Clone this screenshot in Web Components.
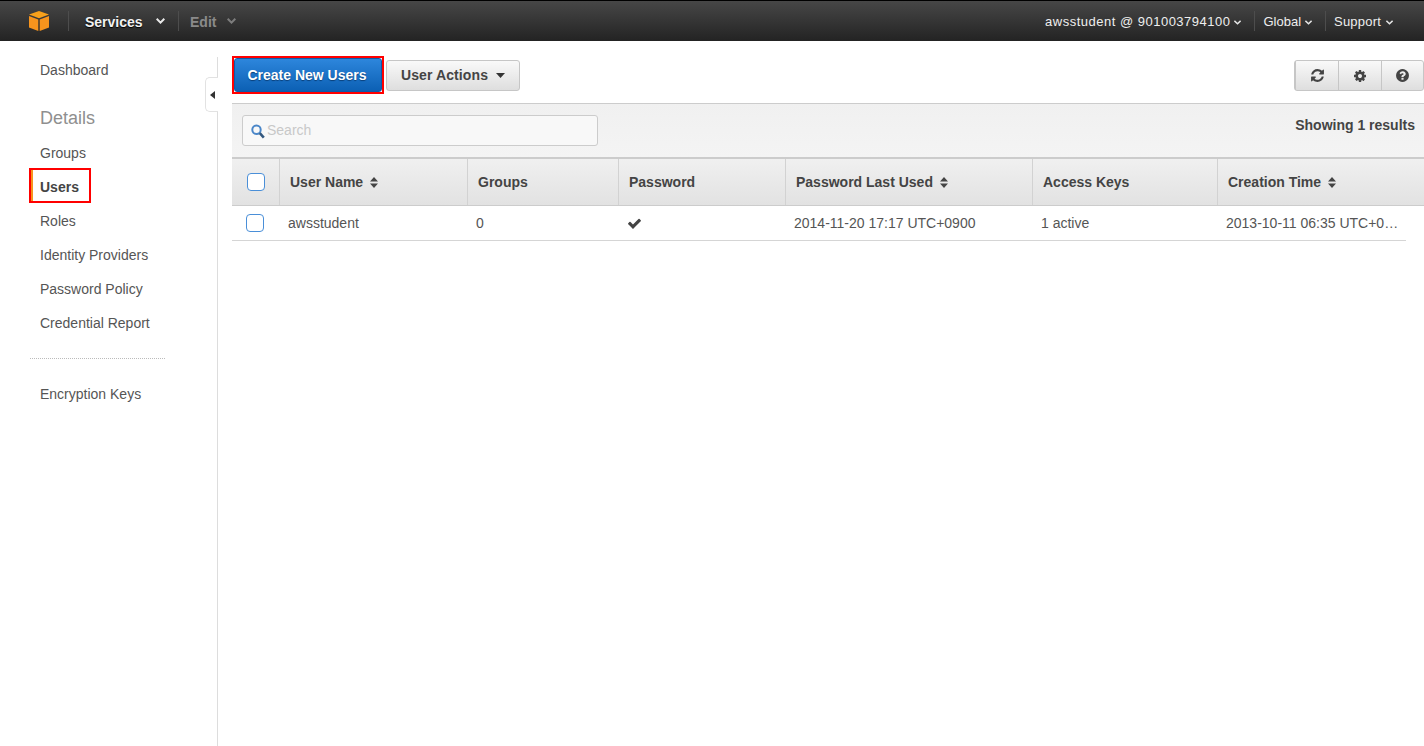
<!DOCTYPE html>
<html lang="en">
<head>
<meta charset="utf-8">
<title>IAM Users</title>
<style>
  html, body { margin: 0; height: 100%; overflow: hidden; background: #fff; }
  body { font: 14px "Liberation Sans", Arial, sans-serif; color: #444; }
</style>
</head>
<body>
<iam-app></iam-app>
<script>
const ICONS = {
  check: "M1671 566q0 40-28 68l-724 724-136 136q-28 28-68 28t-68-28l-136-136-362-362q-28-28-28-68t28-68l136-136q28-28 68-28t68 28l294 295 656-657q28-28 68-28t68 28l136 136q28 28 28 68z",
  refresh: "M1639 1056q0 5-1 7-64 268-268 434.5t-478 166.5q-146 0-282.5-55t-243.5-157l-129 129q-19 19-45 19t-45-19-19-45v-448q0-26 19-45t45-19h448q26 0 45 19t19 45-19 45l-137 137q71 66 161 102t187 36q134 0 250-65t186-179q11-17 53-117 8-23 30-23h192q13 0 22.5 9.5t9.5 22.5zm25-800v448q0 26-19 45t-45 19h-448q-26 0-45-19t-19-45 19-45l138-138q-148-137-349-137-134 0-250 65t-186 179q-11 17-53 117-8 23-30 23h-199q-13 0-22.5-9.5t-9.5-22.5v-7q65-268 270-434.5t480-166.5q146 0 284 55.5t245 156.5l130-129q19-19 45-19t45 19 19 45z",
  cog: "M1152 896q0-106-75-181t-181-75-181 75-75 181 75 181 181 75 181-75 75-181zm512-109v222q0 12-8 23t-20 13l-185 28q-19 54-39 91 35 50 107 138 10 12 10 25t-9 23q-27 37-99 108t-94 71q-12 0-26-9l-138-108q-44 23-91 38-16 136-29 186-7 28-36 28h-222q-14 0-24.5-8.5t-11.5-21.5l-28-184q-49-16-90-37l-141 107q-10 9-25 9-14 0-25-11-126-114-165-168-7-10-7-23 0-12 8-23 15-21 51-66.5t54-70.5q-27-50-41-99l-183-27q-13-2-21-12.5t-8-23.5v-222q0-12 8-23t19-13l186-28q14-46 39-92-40-57-107-138-10-12-10-24 0-10 9-23 26-36 98.5-107.5t94.5-71.5q13 0 26 10l138 107q44-23 91-38 16-136 29-186 7-28 36-28h222q14 0 24.5 8.5t11.5 21.5l28 184q49 16 90 37l142-107q9-9 24-9 13 0 25 10 129 119 165 170 7 8 7 22 0 12-8 23-15 21-51 66.5t-54 70.5q26 50 41 98l183 28q13 2 21 12.5t8 23.5z",
  help: "M1024 1376v-192q0-14-9-23t-23-9h-192q-14 0-23 9t-9 23v192q0 14 9 23t23 9h192q14 0 23-9t9-23zm256-672q0-88-55.5-163t-138.5-116-170-41q-243 0-371 213-15 24 8 42l132 100q7 6 19 6 16 0 25-12 53-68 86-92 34-24 86-24 48 0 85.5 26t37.5 59q0 38-20 61t-68 45q-63 28-115.5 86.5t-52.5 125.5v36q0 14 9 23t23 9h192q14 0 23-9t9-23q0-19 21.5-49.5t54.5-49.5q32-18 49-28.5t46-35 44.5-48 28-60.5 12.5-81zm384 192q0 209-103 385.5t-279.5 279.5-385.5 103-385.5-103-279.5-279.5-103-385.5 103-385.5 279.5-279.5 385.5-103 385.5 103 279.5 279.5 103 385.5z"
};

function icon(name, size, color) {
  return `<svg width="${size}" height="${size}" viewBox="0 0 1792 1792" fill="${color}" style="display:block"><path d="${ICONS[name]}"/></svg>`;
}

class IamTopbar extends HTMLElement {
  constructor() {
    super();
    const chevron = (c) => `<svg width="9" height="6" viewBox="0 0 9 6" fill="none" stroke="${c}" stroke-width="2"><path d="M.7 .8 4.5 4.6 8.3 .8"/></svg>`;
    const caret = `<svg class="caret" width="7" height="5" viewBox="0 0 7 5" fill="none" stroke="#e6e6e6" stroke-width="1.5"><path d="M.4 .8 3.5 3.8 6.6 .8"/></svg>`;
    this.attachShadow({ mode: "open" }).innerHTML = `
      <style>
        :host {
          display: flex; align-items: center; height: 40px; flex: none;
          border-top: 1px solid #000;
          background: linear-gradient(#474747, #232323);
          color: #eee; font-size: 13px;
        }
        .logo { width: 39px; padding-left: 29px; height: 20px; }
        .menu { display: flex; align-items: center; height: 20px; border-left: 1px solid #4d4d4d; font-size: 14px; font-weight: bold; }
        .menu span { position: relative; top: 1px; }
        .services { width: 93px; padding-left: 16px; color: #f2f2f2; text-shadow: 0 1px 1px #000; }
        .services svg { margin-left: 13px; }
        .edit { padding-left: 11px; color: #8a8a8a; }
        .edit svg { margin-left: 11px; }
        .right { margin-left: auto; display: flex; align-items: center; }
        .right div { display: flex; align-items: center; height: 20px; }
        .caret { position: relative; top: 1px; }
        .account { letter-spacing: .5px; padding-right: 13px; }
        .account svg { margin-left: 4px; }
        .region { border-left: 1px solid #4d4d4d; padding: 0 13px 0 8px; }
        .region svg { margin-left: 4px; }
        .support { border-left: 1px solid #4d4d4d; padding: 0 31px 0 8px; letter-spacing: .2px; }
        .support svg { margin-left: 5px; }
      </style>
      <div class="logo">
        <svg width="20" height="20" viewBox="0 0 20 20" style="display:block">
          <path d="M10 0 20 3.6 10 7.2 0 3.6z" fill="#f7a01b"/>
          <path d="M0 5 9.3 8.4V20L0 16.6z" fill="#f7941d"/>
          <path d="M20 5 10.7 8.4V20L20 16.6z" fill="#f7941d"/>
        </svg>
      </div>
      <div class="menu services"><span>Services</span>${chevron("#e8e8e8")}</div>
      <div class="menu edit"><span>Edit</span>${chevron("#7d7d7d")}</div>
      <div class="right">
        <div class="account"><span>awsstudent @ 901003794100</span>${caret}</div>
        <div class="region"><span>Global</span>${caret}</div>
        <div class="support"><span>Support</span>${caret}</div>
      </div>`;
  }
}

class IamNavItem extends HTMLElement {
  constructor() {
    super();
    this.attachShadow({ mode: "open" }).innerHTML = `
      <style>
        :host { display: block; height: 34px; line-height: 34px; padding-left: 40px; color: #555; }
        :host([active]) { padding-left: 31px; font-weight: bold; color: #444; }
        :host([active]) div {
          width: 49px; height: 31px; padding-left: 7px; line-height: 34px;
          border-left: 2px solid #f7941d; outline: 2px solid #f00;
        }
      </style>
      <div><slot></slot></div>`;
  }
}

class IamSidebar extends HTMLElement {
  constructor() {
    super();
    this.attachShadow({ mode: "open" }).innerHTML = `
      <style>
        :host {
          display: block; position: relative; flex: none; width: 218px; padding-top: 12px; box-sizing: border-box;
          background: linear-gradient(#ddd, #ddd) right 0 top 16px / 1px 100% no-repeat;
        }
        h2 { margin: 10px 0 0; padding-left: 40px; height: 39px; line-height: 43px; font-size: 18px; font-weight: normal; color: #8f8f8f; }
        hr { width: 135px; margin: 18px 0 18px 30px; border: 0; border-top: 1px dotted #bbb; }
        .collapse {
          position: absolute; left: 205px; top: 36px; width: 12px; height: 33px;
          display: flex; align-items: center; justify-content: center;
          background: #fff; border: 1px solid #e2e2e2; border-right: 0; border-radius: 5px 0 0 5px;
        }
      </style>
      <slot name="top"></slot>
      <h2>Details</h2>
      <slot></slot>
      <hr>
      <slot name="bottom"></slot>
      <div class="collapse"><svg width="5" height="8" viewBox="0 0 5 8" fill="#333"><path d="M5 0V8L0 4z"/></svg></div>`;
  }
}

class IamButton extends HTMLElement {
  constructor() {
    super();
    const caret = this.hasAttribute("caret") ? `<svg width="9" height="5" viewBox="0 0 9 5" fill="#333"><path d="M0 0H9L4.5 5z"/></svg>` : "";
    this.attachShadow({ mode: "open" }).innerHTML = `
      <style>
        :host { display: block; margin-top: 1px; }
        :host([primary]) { margin-top: 0; border: 2px solid #f00; }
        .face {
          display: flex; align-items: center; box-sizing: border-box; height: 31px;
          padding: 0 14px 2px 14px; border: 1px solid #c6c6c6; border-radius: 3px;
          background: linear-gradient(#f9f9f9, #dedede);
          font-weight: bold; color: #444; letter-spacing: .1px;
        }
        :host([primary]) .face {
          height: 34px; width: 148px; justify-content: center; padding: 0 2px 0 0;
          border: 1px solid #0f5aa8; background: linear-gradient(#2d86dc, #0c60b4);
          color: #fff; text-shadow: 0 1px 1px #0a3f78; letter-spacing: 0;
        }
        svg { margin-left: 8px; position: relative; top: 1px; }
      </style>
      <div class="face"><slot></slot>${caret}</div>`;
  }
}

class IamIconGroup extends HTMLElement {
  constructor() {
    super();
    this.attachShadow({ mode: "open" }).innerHTML = `
      <style>
        :host {
          display: flex; height: 31px; box-sizing: border-box; margin: 1px 0 0 auto;
          border: 1px solid #c6c6c6; border-radius: 3px;
          background: linear-gradient(#f9f9f9, #dedede);
        }
        div { width: 42px; display: flex; align-items: center; justify-content: center; border-left: 1px solid #c6c6c6; }
        div:first-child { border-left: 0; }
        div:last-child { width: 41px; }
      </style>
      <div>${icon("refresh", 15, "#444")}</div>
      <div>${icon("cog", 14, "#444")}</div>
      <div>${icon("help", 15, "#444")}</div>`;
  }
}

class IamFilterBar extends HTMLElement {
  constructor() {
    super();
    this.attachShadow({ mode: "open" }).innerHTML = `
      <style>
        :host {
          display: flex; justify-content: space-between; align-items: flex-start;
          height: 54px; box-sizing: border-box; border-top: 1px solid #ccc;
          background: linear-gradient(#f0f0f0, #f4f4f4); padding: 11px 9px 0 10px;
        }
        .search {
          display: flex; align-items: center; box-sizing: border-box; width: 356px; height: 31px;
          padding: 0 0 2px 8px; border: 1px solid #ccc; border-radius: 3px; background: #f8f8f8; color: #c8c8c8;
        }
        .search svg { margin-right: 2px; margin-top: 4px; }
        .count { font-weight: bold; color: #444; line-height: 20px; }
      </style>
      <div class="search">
        <svg width="14" height="15" viewBox="0 0 14 15" fill="none">
          <circle cx="5.5" cy="5.7" r="4.2" stroke="#4a86c8" stroke-width="2"/>
          <path d="M8.8 9.2 12.8 13.6" stroke="#33587f" stroke-width="2.6"/>
        </svg>
        Search
      </div>
      <div class="count"><slot></slot></div>`;
  }
}

class IamCheckbox extends HTMLElement {
  constructor() {
    super();
    this.attachShadow({ mode: "open" }).innerHTML = `
      <style>
        :host {
          display: block; width: 18px; height: 18px; box-sizing: border-box;
          border: 1px solid #4a8fd8; border-radius: 4px; background: #fff;
        }
      </style>`;
  }
}

const COLUMNS = "47px 188px 151px 167px 247px 185px 1fr";

class IamUserTable extends HTMLElement {
  constructor() {
    super();
    const sort = `<svg width="8" height="11" viewBox="0 0 8 11" fill="#444"><path d="M4 0 8 4.5H0zM4 11 0 6.5H8z"/></svg>`;
    const head = [["User Name", 1], ["Groups"], ["Password"], ["Password Last Used", 1], ["Access Keys"], ["Creation Time", 1]];
    this.attachShadow({ mode: "open" }).innerHTML = `
      <style>
        :host { display: block; }
        .head {
          display: grid; grid-template-columns: ${COLUMNS}; height: 49px; box-sizing: border-box;
          border-top: 2px solid #ccc; border-bottom: 1px solid #ccc;
          background: linear-gradient(#f0f0f0, #e2e2e2); font-weight: bold; color: #444;
        }
        .head > div { display: flex; align-items: center; gap: 7px; padding-left: 10px; border-left: 1px solid #d2d2d2; }
        .head > div:first-child { border-left: 0; padding-left: 15px; }
        .row {
          display: grid; grid-template-columns: ${COLUMNS}; height: 35px; box-sizing: border-box;
          margin-right: 18px; border-bottom: 1px solid #d5d5d5; color: #555;
        }
        .row > div { display: flex; align-items: center; padding-left: 9px; white-space: nowrap; overflow: hidden; }
        .row > div:first-child { padding-left: 14px; }
        .ellipsis { display: block !important; line-height: 34px; text-overflow: ellipsis; padding-right: 4px; }
      </style>
      <div class="head">
        <div><iam-checkbox></iam-checkbox></div>
        ${head.map(([t, s]) => `<div>${t}${s ? sort : ""}</div>`).join("")}
      </div>
      <div class="row">
        <div><iam-checkbox></iam-checkbox></div>
        <div>awsstudent</div>
        <div>0</div>
        <div>${icon("check", 15, "#444")}</div>
        <div>2014-11-20 17:17 UTC+0900</div>
        <div>1 active</div>
        <div class="ellipsis">2013-10-11 06:35 UTC+0900</div>
      </div>`;
  }
}

class IamMain extends HTMLElement {
  constructor() {
    super();
    this.attachShadow({ mode: "open" }).innerHTML = `
      <style>
        :host { display: block; flex: 1; min-width: 0; padding-left: 14px; }
        .actions { display: flex; align-items: center; gap: 2px; height: 38px; margin: 15px 0 9px; }
      </style>
      <div class="actions">
        <iam-button primary>Create New Users</iam-button>
        <iam-button caret>User Actions</iam-button>
        <iam-icon-group></iam-icon-group>
      </div>
      <iam-filter-bar>Showing 1 results</iam-filter-bar>
      <iam-user-table></iam-user-table>`;
  }
}

class IamApp extends HTMLElement {
  constructor() {
    super();
    this.attachShadow({ mode: "open" }).innerHTML = `
      <style>
        :host { display: flex; flex-direction: column; height: 100vh; }
        .body { display: flex; flex: 1; min-height: 0; }
      </style>
      <iam-topbar></iam-topbar>
      <div class="body">
        <iam-sidebar>
          <iam-nav-item slot="top">Dashboard</iam-nav-item>
          <iam-nav-item>Groups</iam-nav-item>
          <iam-nav-item active>Users</iam-nav-item>
          <iam-nav-item>Roles</iam-nav-item>
          <iam-nav-item>Identity Providers</iam-nav-item>
          <iam-nav-item>Password Policy</iam-nav-item>
          <iam-nav-item>Credential Report</iam-nav-item>
          <iam-nav-item slot="bottom">Encryption Keys</iam-nav-item>
        </iam-sidebar>
        <iam-main></iam-main>
      </div>`;
  }
}

customElements.define("iam-topbar", IamTopbar);
customElements.define("iam-nav-item", IamNavItem);
customElements.define("iam-sidebar", IamSidebar);
customElements.define("iam-button", IamButton);
customElements.define("iam-icon-group", IamIconGroup);
customElements.define("iam-filter-bar", IamFilterBar);
customElements.define("iam-checkbox", IamCheckbox);
customElements.define("iam-user-table", IamUserTable);
customElements.define("iam-main", IamMain);
customElements.define("iam-app", IamApp);
</script>
</body>
</html>
